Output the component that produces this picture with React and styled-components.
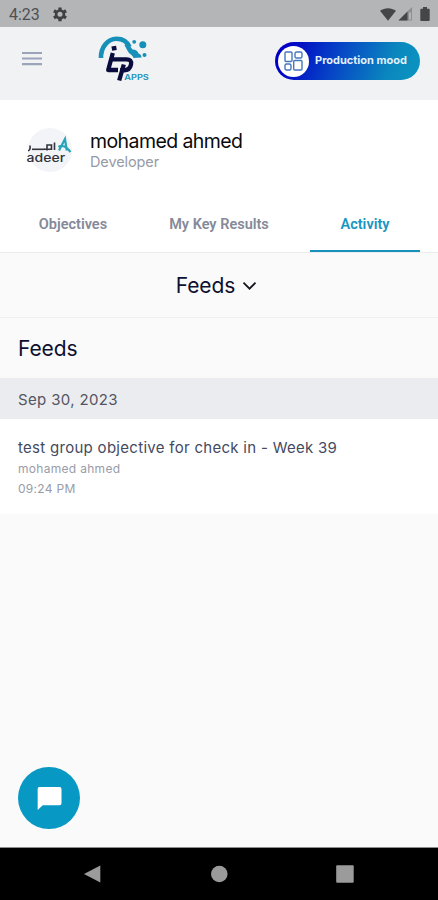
import React from "react";
import styled, { createGlobalStyle } from "styled-components";

const GlobalStyle = createGlobalStyle`
  * { box-sizing: border-box; }
  body { margin: 0; background: #fafafa; }
  h1, h2, p { margin: 0; font-weight: 400; }
  svg { display: block; flex: none; }
`;

const BaseButton = styled.button`
  display: block;
  border: 0;
  padding: 0;
  background: none;
  color: inherit;
  font: inherit;
`;

const Screen = styled.div`
  width: 438px;
  height: 900px;
  display: flex;
  flex-direction: column;
  overflow: hidden;
  background: #fafafa;
  font-family: Inter, "Noto Sans", sans-serif;
`;

const StatusBar = styled.div`
  height: 27px;
  flex: none;
  display: flex;
  align-items: center;
  padding: 2px 8px 0 9px;
  background: #b4b5b7;
  color: #4f5052;
`;

const Clock = styled.span`
  width: 43px;
  font: 400 16px/20px Roboto, sans-serif;
`;

const StatusIcons = styled.div`
  margin-left: auto;
  display: flex;
  align-items: center;
`;

const SignalSlot = styled.span`
  margin: 0 7px 0 2px;
`;

const Header = styled.header`
  height: 73px;
  flex: none;
  display: flex;
  align-items: flex-start;
  padding: 7px 18px 0 22px;
  background: #f0f2f4;
`;

const MenuButton = styled(BaseButton)`
  margin-top: 17px;
`;

const Logo = styled.svg`
  margin-left: 54px;
`;

const ModeToggle = styled(BaseButton)`
  width: 145px;
  height: 38px;
  margin: 8px 0 0 auto;
  display: flex;
  align-items: center;
  gap: 6px;
  padding-left: 3px;
  border-radius: 19px;
  background: linear-gradient(110deg, #0000c4 8%, #0644c6 42%, #0a87be 78%, #0b96c0 100%);
`;

const ModeBadge = styled.span`
  width: 31px;
  height: 31px;
  border-radius: 50%;
  background: #fff;
  display: flex;
  align-items: center;
  justify-content: center;
`;

const ModeLabel = styled.span`
  padding-bottom: 2px;
  font-size: 11px;
  font-weight: 700;
  line-height: 14px;
  color: #e2f0fb;
  white-space: nowrap;
`;

const Profile = styled.section`
  height: 96px;
  flex: none;
  display: flex;
  padding: 27px 0 0 25px;
  background: #fff;
`;

const Identity = styled.div`
  padding: 2px 0 0 16px;
`;

const Name = styled.h1`
  font-size: 19.5px;
  letter-spacing: -0.58px;
  line-height: 24px;
  color: #0a0a0c;
`;

const Role = styled.p`
  font-size: 14.5px;
  letter-spacing: -0.1px;
  line-height: 17px;
  color: #969aa6;
`;

const Tabs = styled.nav`
  height: 57px;
  flex: none;
  display: grid;
  grid-template-columns: 110px 146px 110px;
  justify-content: space-between;
  padding: 0 18px;
  background: #fff;
  border-bottom: 1px solid #ececee;
`;

const Tab = styled(BaseButton)`
  height: 56px;
  padding-top: 4px;
  font: 600 14.5px/20px Roboto, sans-serif;
  color: ${(p) => (p.$active ? "#1796bf" : "#858998")};
  border-bottom: 2px solid ${(p) => (p.$active ? "#1591bb" : "transparent")};
`;

const FeedPicker = styled(BaseButton)`
  height: 65px;
  flex: none;
  display: flex;
  align-items: center;
  justify-content: center;
  gap: 7px;
  padding: 1px 5px 0 0;
  border-bottom: 1px solid #efeff0;
  font-size: 21px;
  letter-spacing: -0.1px;
  line-height: 26px;
  color: #0d1030;
`;

const SectionTitle = styled.h2`
  height: 60px;
  flex: none;
  padding-left: 18px;
  font-size: 21px;
  letter-spacing: -0.1px;
  line-height: 61px;
  color: #0d1030;
`;

const DateRow = styled.div`
  height: 41px;
  flex: none;
  padding-left: 18px;
  background: #ebecf0;
  font-size: 15px;
  letter-spacing: 0.35px;
  line-height: 43px;
  color: #53555f;
`;

const FeedItem = styled.article`
  height: 95px;
  flex: none;
  padding: 18px 18px 0;
  background: #fff;
`;

const FeedText = styled.p`
  font-size: 15px;
  letter-spacing: 0.29px;
  line-height: 22px;
  color: #454a61;
`;

const FeedMeta = styled.p`
  font-size: 12px;
  letter-spacing: 0.3px;
  line-height: 20px;
  color: #999ca8;
`;

const Content = styled.main`
  flex: 1;
  display: flex;
  align-items: flex-end;
  padding: 0 0 18px 18px;
`;

const ChatButton = styled(BaseButton)`
  width: 62px;
  height: 62px;
  border-radius: 50%;
  background: #0798c4;
  display: grid;
  place-items: center;
`;

const SystemNav = styled.nav`
  height: 53px;
  flex: none;
  display: grid;
  grid-template-columns: repeat(3, 126px);
  justify-content: center;
  place-items: center;
  padding-bottom: 1px;
  border-top: 1px solid #8c8c8c;
  background: #000;
`;

const GearIcon = () => (
  <svg width="16" height="16" viewBox="0 0 24 24" fill="none" stroke="#3f4042">
    <circle cx="12" cy="11" r="5.8" strokeWidth="4" />
    <path d="M12 .8v4M12 17.2v4M2.9 5.7l3.5 2M17.6 14.3l3.5 2M2.9 16.3l3.5-2M17.6 7.7l3.5-2" strokeWidth="5" />
  </svg>
);

const WifiIcon = () => (
  <svg width="16" height="14" viewBox="0 0 16 14" fill="#454648">
    <path d="M0 2.7C4.6-.7 11.4-.7 16 2.7L8 12.7Z" />
  </svg>
);

const SignalIcon = () => (
  <svg width="15" height="15" viewBox="0 0 15 15">
    <path d="M14 0V13.5H.5Z" fill="#8d8e90" />
    <path d="M9.5 4.5V13.5H.5Z" fill="#454648" />
    <path d="M11 5.5h2v7h-2Z" fill="#b4b5b7" />
  </svg>
);

const BatteryIcon = () => (
  <svg width="10" height="15" viewBox="0 0 10 15" fill="#454648">
    <path d="M3 0h4v1.7h1.8q.9 0 .9.9v10.5q0 .9-.9.9H1.2q-.9 0-.9-.9v-10.5q0-.9.9-.9H3Z" />
  </svg>
);

const Brand = () => (
  <Logo width="56" height="50" viewBox="96 34 56 50">
    <path d="M101 58C100.6 47.5 107.5 38.8 116.5 38.8C123.5 38.8 127.5 42.2 129.5 47" fill="none" stroke="#168fb9" strokeWidth="4.6" />
    <path d="M127 42.5C130 45.5 131 47.5 132.5 49.5C136 49.5 138 51.5 138.5 53.5C140.5 54 141.5 55.8 141.5 57.5L133.5 58C132.5 54.5 129.500 54.5 128 51.5C126.5 49 125.5 47 124.5 45Z" fill="#168fb9" />
    <circle cx="134.2" cy="41.8" r="1.9" fill="#168fb9" />
    <circle cx="142.8" cy="44.8" r="3.5" fill="#168fb9" />
    <circle cx="144.5" cy="55" r="2" fill="#168fb9" />
    <g fill="none" stroke="#090c3c" strokeWidth="4.3">
      <path d="M111.8 48.6L116.4 47.8" />
      <path d="M112.8 53L108.2 70H118" strokeLinejoin="round" />
      <path d="M111 59.3H126.5Q132 59.5 131 64.5Q129.8 70.3 124 70.3H120" />
      <path d="M123.8 64.5L119.2 80.5" />
    </g>
    <text x="124.3" y="80" textLength="24.5" lengthAdjust="spacingAndGlyphs" fill="#168fb9" fontFamily="Inter, sans-serif" fontSize="7.5" fontWeight="600">APPS</text>
  </Logo>
);

const Avatar = () => (
  <svg width="49" height="46" viewBox="25 127 49 46">
    <circle cx="50" cy="150" r="22" fill="#f2f4f7" />
    <g fill="none" stroke="#34353c" strokeWidth="1.6">
      <path d="M28 150.7Q30.7 150.5 30 145.5" />
      <path d="M32 149.3H44.5" />
      <path d="M44 149.3H51.5V145H47V150.5" />
      <path d="M54.5 142.5V150" />
    </g>
    <path d="M59 150.5L65 139L66.8 150.5M58.5 147Q64 143.5 70.5 152" fill="none" stroke="#27a5b7" strokeWidth="2.2" />
    <text x="26.6" y="162" textLength="38.5" lengthAdjust="spacingAndGlyphs" fill="#303138" fontFamily="Inter, sans-serif" fontSize="12" fontWeight="500">adeer</text>
  </svg>
);

export default function App() {
  return (
    <Screen>
      <GlobalStyle />
      <StatusBar>
        <Clock>4:23</Clock>
        <GearIcon />
        <StatusIcons>
          <WifiIcon />
          <SignalSlot><SignalIcon /></SignalSlot>
          <BatteryIcon />
        </StatusIcons>
      </StatusBar>
      <Header>
        <MenuButton aria-label="Menu">
          <svg width="20" height="16" viewBox="0 0 20 16" stroke="#9ba4b9" strokeWidth="2.2">
            <path d="M0 2h20M0 7.5h20M0 13.2h20" />
          </svg>
        </MenuButton>
        <Brand />
        <ModeToggle>
          <ModeBadge>
            <svg width="19" height="20" viewBox="0 0 19 20" fill="none" stroke="#4577bd" strokeWidth="1.4">
              <rect x="1" y="1" width="7" height="9.5" rx="1" />
              <rect x="11" y="1" width="7" height="6" rx="1.5" />
              <rect x="1" y="13" width="6" height="6" rx="1.5" />
              <rect x="9.7" y="9.5" width="8.3" height="9.5" rx="1" />
            </svg>
          </ModeBadge>
          <ModeLabel>Production mood</ModeLabel>
        </ModeToggle>
      </Header>
      <Profile>
        <Avatar />
        <Identity>
          <Name>mohamed ahmed</Name>
          <Role>Developer</Role>
        </Identity>
      </Profile>
      <Tabs>
        <Tab>Objectives</Tab>
        <Tab>My Key Results</Tab>
        <Tab $active>Activity</Tab>
      </Tabs>
      <FeedPicker>
        Feeds
        <svg width="15" height="10" viewBox="0 0 15 10" fill="none" stroke="#17171f" strokeWidth="1.8">
          <path d="M1.5 1.7L7.5 7.7L13.5 1.7" />
        </svg>
      </FeedPicker>
      <SectionTitle>Feeds</SectionTitle>
      <DateRow>Sep 30, 2023</DateRow>
      <FeedItem>
        <FeedText>test group objective for check in - Week 39</FeedText>
        <FeedMeta>mohamed ahmed</FeedMeta>
        <FeedMeta>09:24 PM</FeedMeta>
      </FeedItem>
      <Content>
        <ChatButton aria-label="Chat">
          <svg width="25" height="25" viewBox="0 0 26 26" fill="#fff">
            <path d="M2.5 1H23.5Q25.5 1 25.5 3V18Q25.5 20 23.5 20H6L.7 25V3Q.7 1 2.5 1Z" />
          </svg>
        </ChatButton>
      </Content>
      <SystemNav>
        <svg width="18" height="18" viewBox="0 0 18 18" fill="#9b9b9b"><path d="M0 9L16.3.5V17.5Z" /></svg>
        <svg width="18" height="18" viewBox="0 0 18 18" fill="#9b9b9b"><circle cx="9.3" cy="9" r="8.3" /></svg>
        <svg width="18" height="18" viewBox="0 0 18 18" fill="#9b9b9b"><rect x=".2" y=".2" width="17.5" height="17.5" rx="1" /></svg>
      </SystemNav>
    </Screen>
  );
}
